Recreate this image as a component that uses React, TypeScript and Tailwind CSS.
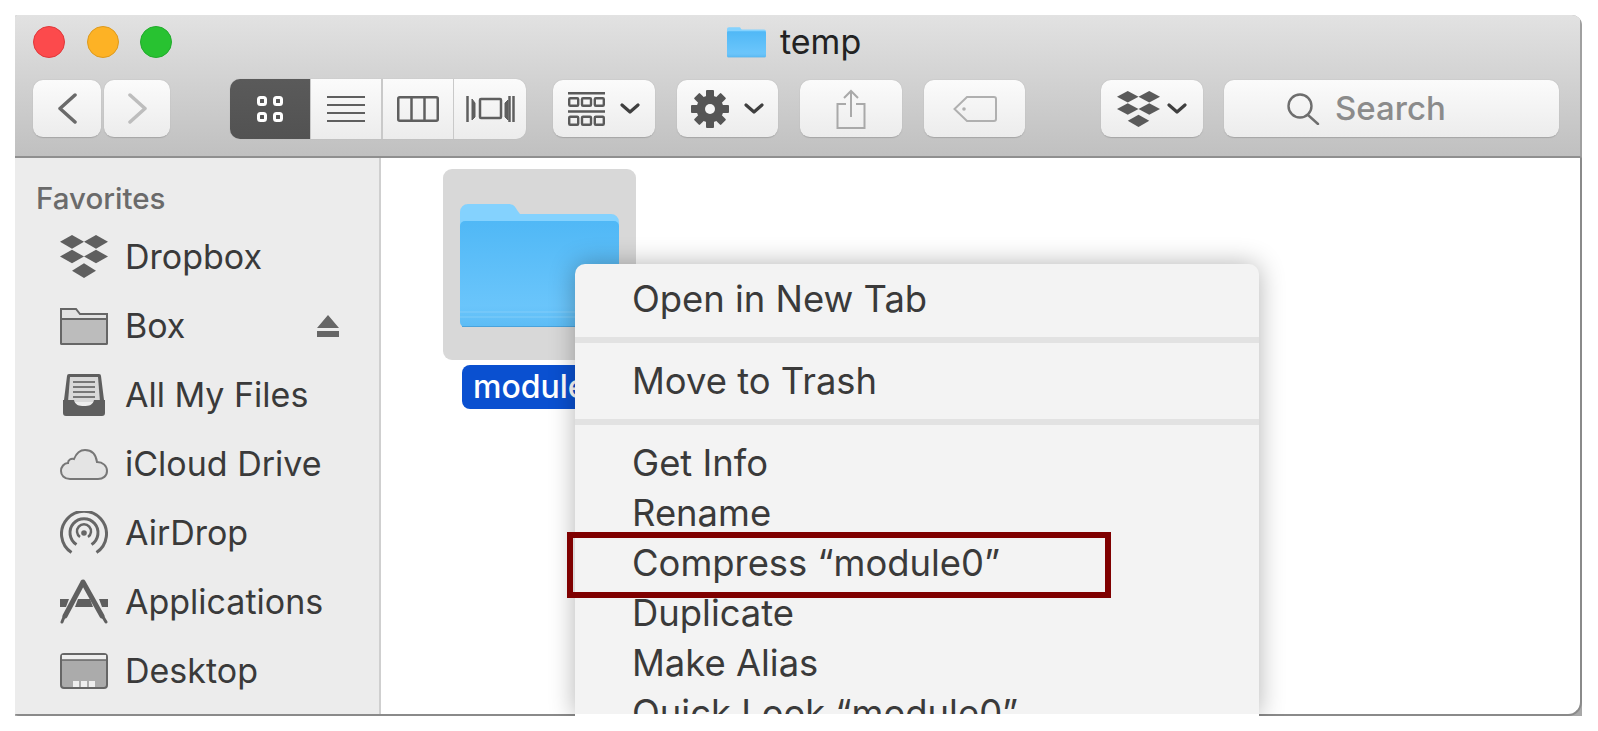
const sans = "font-['Inter','Liberation_Sans',sans-serif]";

function DropboxIcon({ className }: { className?: string }) {
  return (
    <svg viewBox="0 0 48 44" className={className} fill="currentColor" preserveAspectRatio="none">
      <polygon points="12,0 24,7 12,14 0,7" />
      <polygon points="36,0 48,7 36,14 24,7" />
      <polygon points="12,15 24,22 12,29 0,22" />
      <polygon points="36,15 48,22 36,29 24,22" />
      <polygon points="24,29 36,36.5 24,44 12,36.5" />
    </svg>
  );
}

function Chevron({ className }: { className?: string }) {
  return (
    <svg viewBox="0 0 20 11" className={className} fill="none" stroke="#3f3f3f" strokeWidth="3.2" strokeLinecap="round" strokeLinejoin="round">
      <path d="M2 2l8 7 8-7" />
    </svg>
  );
}

function GearIcon({ className }: { className?: string }) {
  return (
    <svg viewBox="0 0 38 38" className={className} fill="#555">
      <circle cx="19" cy="19" r="13.5" />
      {[0, 45, 90, 135, 180, 225, 270, 315].map((deg) => (
        <rect key={deg} x="15" y="0" width="8" height="10" rx="1" transform={`rotate(${deg} 19 19)`} />
      ))}
      <circle cx="19" cy="19" r="5" fill="#f5f5f5" />
    </svg>
  );
}

function BlueFolder({ className }: { className?: string }) {
  return (
    <svg viewBox="0 0 159 125" className={className}>
      <defs>
        <linearGradient id="folderFront" x1="0" y1="0" x2="0" y2="1">
          <stop offset="0" stopColor="#50b8f6" />
          <stop offset="0.8" stopColor="#6ac5fb" />
          <stop offset="1" stopColor="#5cbcf5" />
        </linearGradient>
      </defs>
      <path d="M0 10a8 8 0 0 1 8-8h40c5 0 7 2 9 6l3 4h91a8 8 0 0 1 8 8v20H0z" fill="#84d2fe" />
      <rect x="0" y="19" width="159" height="106" rx="5" fill="url(#folderFront)" />
      <path d="M0 110h159M0 115h159" stroke="#8ed2fa" strokeWidth="1" opacity="0.7" />
      <path d="M2 124.5h155" stroke="#4aa3dc" strokeWidth="1" />
    </svg>
  );
}

function ToolButton({ className, children }: { className: string; children: React.ReactNode }) {
  return (
    <div className={`flex h-[58px] items-center justify-center rounded-[10px] border-b border-[#a8a8a8] bg-gradient-to-b from-[#fbfbfb] to-[#ececec] shadow-[0_0_1px_#a0a0a0] ${className}`}>
      {children}
    </div>
  );
}

function ViewSwitcher() {
  return (
    <div className="flex h-[60px] w-[296px] overflow-hidden rounded-[10px] bg-[#c9c9c9] shadow-[0_0_1px_#a8a8a8]">
      <div className="flex w-[80px] items-center justify-center bg-gradient-to-b from-[#5a5a5a] to-[#525252]">
        <svg viewBox="0 0 26 26" className="h-[26px] w-[26px]" fill="none" stroke="#fff" strokeWidth="3">
          <rect x="1.5" y="1.5" width="7" height="7" rx="2" />
          <rect x="17.5" y="1.5" width="7" height="7" rx="2" />
          <rect x="1.5" y="17.5" width="7" height="7" rx="2" />
          <rect x="17.5" y="17.5" width="7" height="7" rx="2" />
        </svg>
      </div>
      <div className="ml-px flex w-[70px] items-center justify-center bg-gradient-to-b from-[#fbfbfb] to-[#ececec]">
        <svg viewBox="0 0 38 26" className="h-[26px] w-[38px]" stroke="#5f5f5f" strokeWidth="2">
          <path d="M0 1h38M0 9h38M0 17h38M0 25h38" />
        </svg>
      </div>
      <div className="ml-[2px] flex w-[70px] items-center justify-center bg-gradient-to-b from-[#fbfbfb] to-[#ececec]">
        <svg viewBox="0 0 42 26" className="h-[26px] w-[42px]" fill="none" stroke="#5f5f5f" strokeWidth="2.5">
          <rect x="1.25" y="1.25" width="39.5" height="23.5" rx="1.5" />
          <path d="M14.5 1v24M27.5 1v24" />
        </svg>
      </div>
      <div className="ml-px flex flex-1 items-center justify-center bg-gradient-to-b from-[#fbfbfb] to-[#ececec]">
        <svg viewBox="0 0 49 26" className="h-[26px] w-[49px]" fill="none" stroke="#5f5f5f" strokeWidth="2.5">
          <path d="M1.5 0v26M47.5 0v26M43.5 0v26" />
          <rect x="14" y="3" width="21" height="19" rx="1" />
          <path d="M6 3v21l3-3V7zM39 7l3-3v20l-3-3z" fill="#5f5f5f" strokeWidth="1" />
        </svg>
      </div>
    </div>
  );
}

function Toolbar() {
  return (
    <div className="mt-[10px] flex items-center pl-[18px]">
      <ToolButton className="w-[68px]">
        <svg viewBox="0 0 19 31" className="h-[31px] w-[19px]" fill="none" stroke="#6a6a6a" strokeWidth="3.5" strokeLinecap="round" strokeLinejoin="round">
          <path d="M17 2L2 15.5 17 29" />
        </svg>
      </ToolButton>
      <ToolButton className="ml-[3px] w-[66px]">
        <svg viewBox="0 0 19 31" className="h-[31px] w-[19px]" fill="none" stroke="#bdbdbd" strokeWidth="3.5" strokeLinecap="round" strokeLinejoin="round">
          <path d="M2 2l15 13.5L2 29" />
        </svg>
      </ToolButton>
      <div className="ml-[60px]">
        <ViewSwitcher />
      </div>
      <ToolButton className="ml-[27px] w-[102px] gap-[15px]">
        <svg viewBox="0 0 37 34" className="h-[34px] w-[37px]" fill="none" stroke="#5a5a5a" strokeWidth="2.4">
          <path d="M0 1.2h37M0 19.5h37" />
          <rect x="1.2" y="6.2" width="9" height="7.6" rx="1" />
          <rect x="14" y="6.2" width="9" height="7.6" rx="1" />
          <rect x="26.8" y="6.2" width="9" height="7.6" rx="1" />
          <rect x="1.2" y="24.7" width="9" height="8" rx="1" />
          <rect x="14" y="24.7" width="9" height="8" rx="1" />
          <rect x="26.8" y="24.7" width="9" height="8" rx="1" />
        </svg>
        <Chevron className="h-[11px] w-[20px]" />
      </ToolButton>
      <ToolButton className="ml-[22px] w-[101px] gap-[15px]">
        <GearIcon className="h-[38px] w-[38px]" />
        <Chevron className="h-[11px] w-[20px]" />
      </ToolButton>
      <ToolButton className="ml-[22px] w-[102px]">
        <svg viewBox="0 0 30 40" className="h-[40px] w-[30px]" fill="none" stroke="#a9a9a9" strokeWidth="2">
          <path d="M10 15H1.5v24h27V15H20M15 28V2M8 9l7-7 7 7" />
        </svg>
      </ToolButton>
      <ToolButton className="ml-[22px] w-[101px]">
        <svg viewBox="0 0 44 26" className="h-[26px] w-[44px]" fill="none" stroke="#b0b0b0" strokeWidth="2">
          <path d="M14 1h27a2 2 0 0 1 2 2v20a2 2 0 0 1-2 2H14L1.5 13z" />
          <circle cx="11" cy="13" r="1.8" fill="#b0b0b0" stroke="none" />
        </svg>
      </ToolButton>
      <ToolButton className="ml-[76px] w-[102px] gap-[7px]">
        <DropboxIcon className="h-[36px] w-[43px] text-[#5a5a5a]" />
        <Chevron className="h-[11px] w-[20px]" />
      </ToolButton>
      <ToolButton className="ml-[21px] w-[335px] justify-start pl-[62px]">
        <svg viewBox="0 0 35 32" className="h-[32px] w-[35px]" fill="none" stroke="#6e6e6e" strokeWidth="2.4" strokeLinecap="round">
          <circle cx="14" cy="13" r="11.5" />
          <path d="M22 22l10 9" />
        </svg>
        <span className={`ml-[14px] text-[33px] font-medium leading-none text-[#8b8b8b] ${sans}`}>Search</span>
      </ToolButton>
    </div>
  );
}

const sidebarItems = [
  {
    name: 'Dropbox',
    icon: <DropboxIcon className="h-[43px] w-[48px] text-[#5f5f5f]" />,
  },
  {
    name: 'Box',
    eject: true,
    icon: (
      <svg viewBox="0 0 48 38" className="h-[38px] w-[48px]" stroke="#666" strokeWidth="2">
        <path d="M1 36V2h15l4 5h27v29a1 1 0 0 1-1 1H2a1 1 0 0 1-1-1z" fill="#e2e2e2" />
        <path d="M1 12h46v24a1 1 0 0 1-1 1H2a1 1 0 0 1-1-1z" fill="#bcbcbc" />
      </svg>
    ),
  },
  {
    name: 'All My Files',
    icon: (
      <svg viewBox="0 0 48 42" className="h-[42px] w-[48px]">
        <path d="M7 2a2 2 0 0 1 2-2h30a2 2 0 0 1 2 2l3 24H4z" fill="#5e5e5e" />
        <path d="M10 3h28l2 25H8z" fill="#d8d8d8" />
        <path d="M13 8h22M13 13h22M13 18h22M13 23h22" stroke="#777" strokeWidth="2" />
        <path d="M3 26h11c1 5 5 6 10 6s9-1 10-6h11v13a3 3 0 0 1-3 3H6a3 3 0 0 1-3-3z" fill="#5e5e5e" />
      </svg>
    ),
  },
  {
    name: 'iCloud Drive',
    icon: (
      <svg viewBox="0 0 48 32" className="h-[32px] w-[48px]" fill="#e4e4e4" stroke="#777" strokeWidth="2">
        <path d="M10 31C4 31 1 27 1 23c0-4 3-8 7-8 0-3 3-5 6-4 2-5 6-9 11-9 7 0 11 5 12 12 6 0 10 4 10 9s-4 8-9 8z" />
      </svg>
    ),
  },
  {
    name: 'AirDrop',
    icon: (
      <svg viewBox="0 0 48 44" className="h-[44px] w-[48px]" fill="none" stroke="#666" strokeWidth="3">
        <path d="M11.5 41.5a22.5 22.5 0 1 1 25 0" />
        <path d="M16.5 33.5a14 14 0 1 1 15 0" />
        <path d="M20 26a7 7 0 1 1 8 0" strokeWidth="2.5" />
        <circle cx="24" cy="22" r="2.8" fill="#666" stroke="none" />
      </svg>
    ),
  },
  {
    name: 'Applications',
    icon: (
      <svg viewBox="0 0 48 45" className="h-[45px] w-[48px]" fill="none" stroke="#5f5f5f" strokeLinecap="round">
        <path d="M0 20h9l-3 8H0zM48 20h-9l3 8h6zM18 20h12l3 8H15z" fill="#5f5f5f" stroke="none" />
        <path d="M22 5L5 37" strokeWidth="5" />
        <path d="M23 3l19 34" strokeWidth="5" />
        <path d="M2 43l2-5M46 43l-3-5" strokeWidth="3" />
      </svg>
    ),
  },
  {
    name: 'Desktop',
    icon: (
      <svg viewBox="0 0 48 36" className="h-[36px] w-[48px]">
        <rect x="1" y="1" width="46" height="34" rx="3" fill="#ababab" stroke="#666" strokeWidth="2" />
        <rect x="2" y="2" width="44" height="5" fill="#eee" />
        <path d="M2 7h44" stroke="#666" strokeWidth="1.5" />
        <path d="M13 28h6v6h-6zM21 28h6v6h-6zM29 28h6v6h-6z" fill="#eee" />
      </svg>
    ),
  },
];

function Sidebar() {
  return (
    <div className={`w-[366px] shrink-0 border-r-2 border-[#cfcfcf] bg-[#ececec] ${sans}`}>
      <div className="pl-[21px] pt-[25px] text-[29.5px] font-medium leading-[30px] text-[#6a6a6a]">Favorites</div>
      <div className="mt-[9px]">
        {sidebarItems.map((item) => (
          <div key={item.name} className="flex h-[69px] items-center pl-[45px] pr-[40px] text-[34px] text-[#3a3a3a]">
            <div className="flex w-[48px] justify-center">{item.icon}</div>
            <span className="ml-[17px] flex-1">{item.name}</span>
            {item.eject && (
              <svg viewBox="0 0 22 22" className="h-[22px] w-[22px]" fill="#666">
                <path d="M11 0l11 13H0zM0 16h22v6H0z" />
              </svg>
            )}
          </div>
        ))}
      </div>
    </div>
  );
}

function MenuSeparator() {
  return <div className="my-[13px] h-[6px] bg-[#e2e2e2]" />;
}

function MenuRow({ children, boxed }: { children: React.ReactNode; boxed?: boolean }) {
  return (
    <div className="relative flex h-[50px] items-center whitespace-nowrap pl-[57px]">
      {children}
      {boxed && <div className="absolute left-[-8px] top-[-6px] h-[66px] w-[544px] border-[6px] border-[#7f0000]" />}
    </div>
  );
}

function ContextMenu() {
  return (
    <div className={`absolute left-[560px] top-[106px] h-[452px] w-[684px] rounded-t-[10px] border-b-2 border-white bg-[#f3f3f3] pt-[10px] text-[36.4px] text-[#3a3a3a] shadow-[0_0_26px_rgba(0,0,0,0.3)] ${sans}`}>
      <MenuRow>Open in New Tab</MenuRow>
      <MenuSeparator />
      <MenuRow>Move to Trash</MenuRow>
      <MenuSeparator />
      <MenuRow>Get Info</MenuRow>
      <MenuRow>Rename</MenuRow>
      <MenuRow boxed>Compress “module0”</MenuRow>
      <MenuRow>Duplicate</MenuRow>
      <MenuRow>Make Alias</MenuRow>
      {/* cut off by the bottom of the window */}
      <div className="h-[26px] overflow-hidden">
        <MenuRow>Quick Look “module0”</MenuRow>
      </div>
    </div>
  );
}

export default function App() {
  return (
    <div className="min-h-[731px] bg-white pl-[15px] pt-[15px]">
      <div className="h-[701px] w-[1567px] overflow-hidden rounded-tl-[2px] rounded-tr-[10px] bg-[#a8a8a8]">
        <div className="h-[143px] border-b-2 border-r-2 border-b-[#8f8f8f] border-r-[#a0a0a0] bg-gradient-to-b from-[#e2e2e2] to-[#c0c0c0]">
          <div className="flex h-[54px] items-center pl-[18px]">
            <div className="h-[32px] w-[32px] rounded-full border border-[#e0383a] bg-[#fc4a4c]" />
            <div className="ml-[22px] h-[32px] w-[32px] rounded-full border border-[#dd9a1e] bg-[#fdb225]" />
            <div className="ml-[21px] h-[32px] w-[32px] rounded-full border border-[#21ab2c] bg-[#28c231]" />
            <div className="ml-[555px] flex items-center">
              <BlueFolder className="h-[32px] w-[39px]" />
              <span className={`ml-[14px] text-[34px] leading-none text-[#222] ${sans}`}>temp</span>
            </div>
          </div>
          <Toolbar />
        </div>
        <div className="relative flex h-[558px] rounded-bl-[4px] rounded-br-[14px] border-b-2 border-r-2 border-[#8a8a8a] bg-white">
          <Sidebar />
          <div className="flex-1 pl-[62px] pt-[11px]">
            <div className="flex h-[191px] w-[193px] items-start justify-center rounded-[9px] bg-[#d8d8d8] pt-[33px]">
              <BlueFolder className="h-[125px] w-[159px]" />
            </div>
            <div className={`ml-[19px] mt-[5px] flex h-[44px] w-[180px] items-center rounded-[8px] bg-[#0a50d0] pl-[11px] text-[32px] font-medium text-white ${sans}`}>
              module0
            </div>
            <ContextMenu />
          </div>
        </div>
      </div>
    </div>
  );
}
